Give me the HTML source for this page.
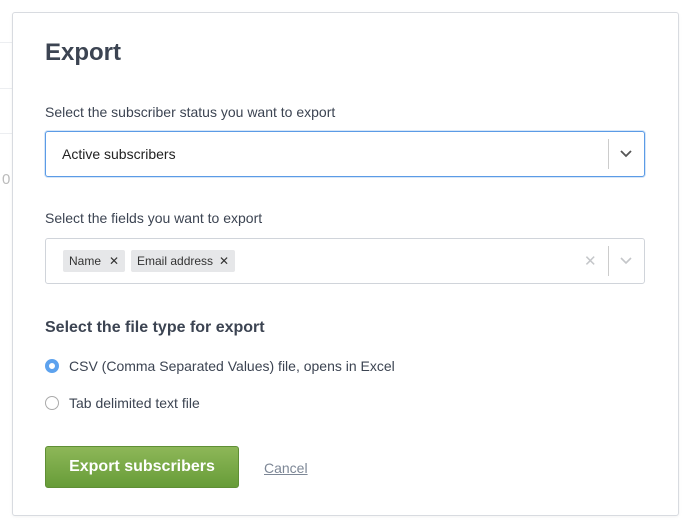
<!DOCTYPE html><html><head><style>
body{margin:0;width:690px;height:525px;background:#fff;font-family:"Liberation Sans",sans-serif;position:relative;overflow:hidden;color:#3c4452}
.bgl{position:absolute;left:0;width:12px;height:1px;background:#eceef1}
.modal{position:absolute;left:12px;top:12px;width:665px;height:502px;border:1px solid #d8dbe0;border-radius:3px;background:#fff;box-shadow:0 1px 3px rgba(0,0,0,.05)}
.a{position:absolute}
.lbl{font-size:14px;color:#3c4452}
.box{position:absolute;left:45px;width:598px;border:1px solid #d0d4da;border-radius:3px;background:#fff}
.tag{position:absolute;top:250px;height:22px;background:#e6e7e9;border-radius:2px;font-size:12px;line-height:22px;color:#333;padding-left:6px}
.radio{position:absolute;left:45px;width:14px;height:14px;border-radius:50%;box-sizing:border-box}
</style></head><body>
<div class="bgl" style="top:42px"></div><div class="bgl" style="top:88px"></div><div class="bgl" style="top:133px"></div>
<div class="a" style="left:2px;top:171px;font-size:15px;color:#bbb">0</div>
<div class="modal"></div>
<div class="a" style="left:45px;top:39px;font-size:24px;font-weight:bold;color:#3c4452">Export</div>
<div class="a lbl" style="left:45px;top:104px">Select the subscriber status you want to export</div>
<div class="box" style="top:131px;height:44px;border-color:#5b9be6;box-shadow:0 0 0 1px #d6e6f8"></div>
<div class="a" style="left:62px;top:146px;font-size:14px;color:#222">Active subscribers</div>
<div class="a" style="left:608px;top:139px;width:1px;height:30px;background:#ccc"></div>
<svg class="a" style="left:619px;top:148px" width="14" height="12"><path d="M2 3l5 5 5-5" fill="none" stroke="#555" stroke-width="1.8"/></svg>
<div class="a lbl" style="left:45px;top:210px">Select the fields you want to export</div>
<div class="box" style="top:238px;height:44px"></div>
<div class="tag" style="left:63px;width:56px">Name<span style="position:absolute;left:46px">✕</span></div>
<div class="tag" style="left:131px;width:98px">Email address<span style="position:absolute;left:88px">✕</span></div>
<div class="a" style="left:584px;top:252px;font-size:15px;color:#c4c6c9">✕</div>
<div class="a" style="left:608px;top:246px;width:1px;height:30px;background:#ccc"></div>
<svg class="a" style="left:619px;top:255px" width="14" height="12"><path d="M2 3l5 5 5-5" fill="none" stroke="#c4c6c9" stroke-width="1.6"/></svg>
<div class="a" style="left:45px;top:319px;font-size:16px;font-weight:bold;color:#3c4452">Select the file type for export</div>
<div class="radio" style="top:359px;background:#fff;border:4px solid #5da2ee"></div>
<div class="a lbl" style="left:69px;top:358px">CSV (Comma Separated Values) file, opens in Excel</div>
<div class="radio" style="top:396px;border:1px solid #aaa"></div>
<div class="a lbl" style="left:69px;top:395px">Tab delimited text file</div>
<div class="a" style="left:45px;top:446px;width:194px;height:42px;border-radius:3px;background:linear-gradient(#8db758,#679c38);border:1px solid #5f8f35;box-sizing:border-box;color:#fff;font-size:16px;font-weight:bold;text-align:center;line-height:40px">Export subscribers</div>
<div class="a" style="left:264px;top:460px;font-size:14px;color:#7d8796;text-decoration:underline">Cancel</div>
</body></html>
